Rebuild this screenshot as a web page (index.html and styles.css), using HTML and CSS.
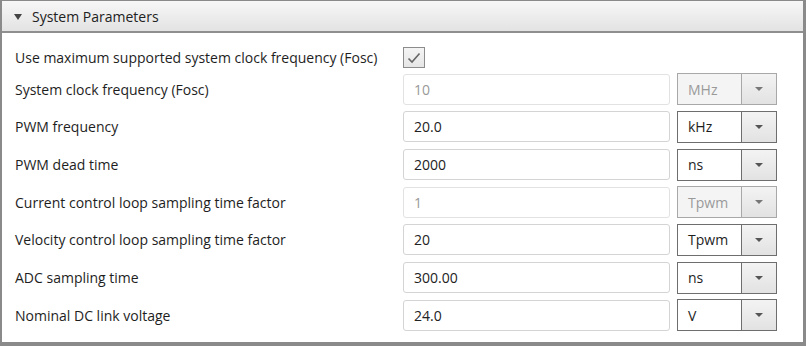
FILE: index.html
```html
<!DOCTYPE html>
<html lang="en">
<head>
    <meta charset="UTF-8">
    <title>System Parameters</title>
    <link rel="stylesheet" href="styles.css">
</head>
<body>
    <div class="panel">
        <div class="panel-header">
            <span class="caret"></span>
            <span>System Parameters</span>
        </div>
        <div class="params">
            <label class="first">Use maximum supported system clock frequency (Fosc)</label>
            <div class="check-cell">
                <span class="checkbox">
                    <svg width="16" height="14" viewBox="0 0 16 14"><path d="M2.5 7.5 L6 11 L13.5 2.5" fill="none" stroke="#666" stroke-width="1.6"/></svg>
                </span>
            </div>

            <label>System clock frequency (Fosc)</label>
            <div class="field disabled">10</div>
            <div class="unit disabled"><span class="unit-text">MHz</span><span class="unit-btn"><i></i></span></div>

            <label>PWM frequency</label>
            <div class="field">20.0</div>
            <div class="unit"><span class="unit-text">kHz</span><span class="unit-btn"><i></i></span></div>

            <label>PWM dead time</label>
            <div class="field">2000</div>
            <div class="unit"><span class="unit-text">ns</span><span class="unit-btn"><i></i></span></div>

            <label>Current control loop sampling time factor</label>
            <div class="field disabled">1</div>
            <div class="unit disabled"><span class="unit-text">Tpwm</span><span class="unit-btn"><i></i></span></div>

            <label>Velocity control loop sampling time factor</label>
            <div class="field">20</div>
            <div class="unit"><span class="unit-text">Tpwm</span><span class="unit-btn"><i></i></span></div>

            <label>ADC sampling time</label>
            <div class="field">300.00</div>
            <div class="unit"><span class="unit-text">ns</span><span class="unit-btn"><i></i></span></div>

            <label>Nominal DC link voltage</label>
            <div class="field">24.0</div>
            <div class="unit"><span class="unit-text">V</span><span class="unit-btn"><i></i></span></div>
        </div>
    </div>
</body>
</html>
```

FILE: styles.css
```css
body {
    margin: 0;
    font-family: "Open Sans", "Noto Sans", sans-serif;
    font-size: 14px;
    color: #1e1e1e;
    background: #fff;
}
.panel {
    width: 806px;
    height: 346px;
    box-sizing: border-box;
    border: 2px solid #8a8a8a;
    border-top-width: 1px;
    border-right-width: 3px;
    border-bottom-width: 4px;
    background: #fff;
}
.panel-header {
    height: 30px;
    display: flex;
    align-items: center;
    gap: 10px;
    padding-left: 12px;
    background: linear-gradient(#f7f7f7, #e3e3e3);
    border-bottom: 2px solid #8f8f8f;
    color: #222;
}
.caret {
    width: 0;
    height: 0;
    border-left: 4px solid transparent;
    border-right: 4px solid transparent;
    border-top: 6px solid #444;
    margin-top: 1px;
}
.params {
    display: grid;
    grid-template-columns: 381px 267px 100px;
    column-gap: 7px;
    row-gap: 6.7px;
    grid-template-rows: 22px;
    grid-auto-rows: 31px;
    padding: 12px 0 0 13px;
    align-items: center;
}
.params .first {
    padding-top: 3px;
}
.check-cell {
    grid-column: span 2;
    align-self: start;
    padding-top: 2px;
}
.checkbox {
    display: flex;
    align-items: center;
    justify-content: center;
    width: 20px;
    height: 19px;
    border: 1px solid #8c8c8c;
    background: linear-gradient(#f4f4f4, #e6e6e6);
}
.field {
    height: 31px;
    box-sizing: border-box;
    border: 1px solid #d4d4d4;
    border-radius: 3px;
    padding: 0 10px;
    display: flex;
    align-items: center;
    color: #222;
}
.field.disabled {
    border-color: #e2e2e2;
    color: #999;
}
.unit {
    height: 32px;
    box-sizing: border-box;
    border: 1px solid #6e6e6e;
    display: flex;
    background: #fff;
}
.unit-text {
    flex: 1;
    display: flex;
    align-items: center;
    padding-left: 10px;
    border-right: 1px solid #6e6e6e;
}
.unit-btn {
    width: 34px;
    display: flex;
    align-items: center;
    justify-content: center;
    background: linear-gradient(#f3f3f3, #e2e2e2);
}
.unit-btn i {
    width: 0;
    height: 0;
    border-left: 4px solid transparent;
    border-right: 4px solid transparent;
    border-top: 4px solid #555;
}
.unit.disabled {
    border-color: #a8a8a8;
    background: #f4f4f4;
    color: #9a9a9a;
}
.unit.disabled .unit-text {
    border-right-color: #a8a8a8;
}
.unit.disabled .unit-btn i {
    border-top-color: #777;
}
```
